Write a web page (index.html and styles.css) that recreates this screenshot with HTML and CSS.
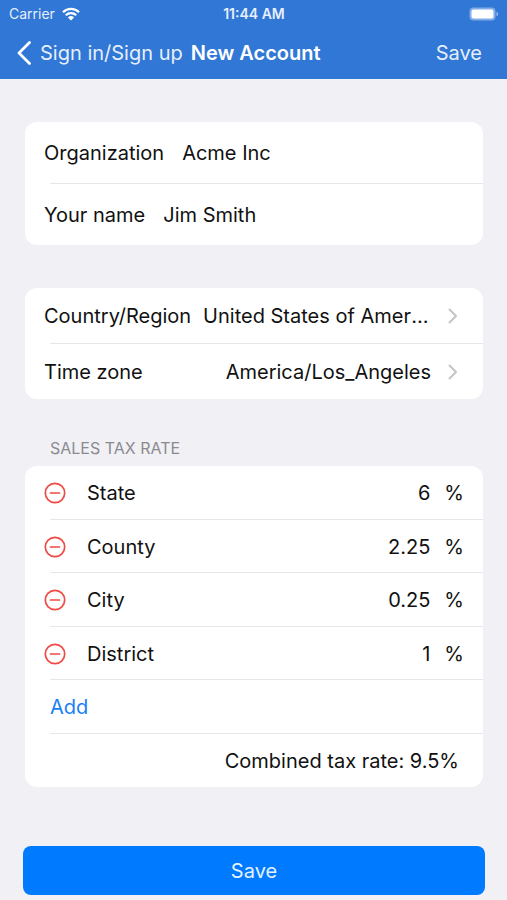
FILE: index.html
```html
<!DOCTYPE html>
<html lang="en">
<head>
<meta charset="utf-8">
<meta name="viewport" content="width=device-width, initial-scale=1">
<title>New Account</title>
<link rel="stylesheet" href="styles.css">
</head>
<body>
<header class="top">
  <div class="status">
    <div class="carrier">
      <span>Carrier</span>
      <svg class="wifi" viewBox="0 0 18 14" aria-hidden="true">
        <path d="M1 5.200a11.400 11.400 0 0 1 16 0M3.800 8.200a7.400 7.400 0 0 1 10.400 0" fill="none" stroke="currentColor" stroke-width="2.300"/>
        <path d="M9 13.600 5.900 10.400a4.500 4.500 0 0 1 6.200 0z" fill="currentColor"/>
      </svg>
    </div>
    <time class="clock">11:44 AM</time>
    <svg class="battery" viewBox="0 0 30 14" aria-hidden="true">
      <rect x=".5" y=".5" width="26" height="13" rx="4" fill="currentColor" opacity=".4"/>
      <rect x="2.500" y="2.500" width="22" height="9" rx="2" fill="currentColor"/>
      <path d="M27.500 4.700c2.200.7 2.200 3.900 0 4.600z" fill="currentColor" opacity=".5"/>
    </svg>
  </div>
  <nav class="bar">
    <a class="back" href="#">
      <svg class="back-icon" viewBox="0 0 14 24" aria-hidden="true"><path d="M12.500 1.500 2 12l10.500 10.500" fill="none" stroke="currentColor" stroke-width="2.800" stroke-linecap="round" stroke-linejoin="round"/></svg>
      <span>Sign in/Sign up</span>
    </a>
    <h1 class="title">New Account</h1>
    <button class="bar-save" type="submit" form="account">Save</button>
  </nav>
</header>

<main>
  <form id="account" class="form">
    <section class="card card-names">
      <div class="row">
        <label for="org">Organization</label>
        <input class="field" id="org" type="text" value="Acme Inc">
      </div>
      <div class="row">
        <label for="name">Your name</label>
        <input class="field" id="name" type="text" value="Jim Smith">
      </div>
    </section>

    <section class="card card-region">
      <button class="row" type="button">
        <span>Country/Region</span>
        <span class="choice">United States of America</span>
        <svg class="chevron" viewBox="0 0 10 16" aria-hidden="true"><path d="m1.500 1.500 6.500 6.500-6.500 6.500" fill="none" stroke="currentColor" stroke-width="2" stroke-linecap="round" stroke-linejoin="round"/></svg>
      </button>
      <button class="row" type="button">
        <span>Time zone</span>
        <span class="choice">America/Los_Angeles</span>
        <svg class="chevron" viewBox="0 0 10 16" aria-hidden="true"><path d="m1.500 1.500 6.500 6.500-6.500 6.500" fill="none" stroke="currentColor" stroke-width="2" stroke-linecap="round" stroke-linejoin="round"/></svg>
      </button>
    </section>

    <h2 class="heading">SALES TAX RATE</h2>
    <section class="card card-tax">
      <div class="row">
        <button class="remove" type="button" aria-label="Remove State"><svg viewBox="0 0 22 22" aria-hidden="true"><circle cx="11" cy="11" r="9.700"/><path d="M6.500 11h9"/></svg></button>
        <label for="state">State</label>
        <input class="rate" id="state" type="text" inputmode="decimal" value="6">
        <span class="unit">%</span>
      </div>
      <div class="row">
        <button class="remove" type="button" aria-label="Remove County"><svg viewBox="0 0 22 22" aria-hidden="true"><circle cx="11" cy="11" r="9.700"/><path d="M6.500 11h9"/></svg></button>
        <label for="county">County</label>
        <input class="rate" id="county" type="text" inputmode="decimal" value="2.25">
        <span class="unit">%</span>
      </div>
      <div class="row">
        <button class="remove" type="button" aria-label="Remove City"><svg viewBox="0 0 22 22" aria-hidden="true"><circle cx="11" cy="11" r="9.700"/><path d="M6.500 11h9"/></svg></button>
        <label for="city">City</label>
        <input class="rate" id="city" type="text" inputmode="decimal" value="0.25">
        <span class="unit">%</span>
      </div>
      <div class="row">
        <button class="remove" type="button" aria-label="Remove District"><svg viewBox="0 0 22 22" aria-hidden="true"><circle cx="11" cy="11" r="9.700"/><path d="M6.500 11h9"/></svg></button>
        <label for="district">District</label>
        <input class="rate" id="district" type="text" inputmode="decimal" value="1">
        <span class="unit">%</span>
      </div>
      <button class="row add" type="button">Add</button>
      <div class="row total">Combined tax rate: 9.5%</div>
    </section>

    <button class="save" type="submit">Save</button>
  </form>
</main>
</body>
</html>
```
FILE: styles.css
```css
* {
  box-sizing: border-box;
}

body {
  margin: 0;
  background: #f1f0f5;
  color: #111;
  font: 20px/24px Inter, "Liberation Sans", sans-serif;
}

button,
input {
  margin: 0;
  padding: 0;
  border: 0;
  background: none;
  color: inherit;
  font: inherit;
}

button {
  cursor: pointer;
}

svg {
  display: block;
  flex: none;
}

.top {
  background: #3077d6;
  color: #fff;
}

.status {
  display: grid;
  grid-template-columns: 1fr auto 1fr;
  align-items: center;
  height: 27px;
  padding: 0 8px 0 9px;
  font-size: 14px;
  line-height: 20px;
}

.carrier {
  display: flex;
  align-items: center;
  gap: 7px;
  color: #e6effb;
}

.wifi {
  width: 18px;
  height: 14px;
  color: #fff;
}

.clock {
  font-weight: 600;
  color: #e6effb;
}

.battery {
  width: 30px;
  height: 14px;
  justify-self: end;
}

.bar {
  display: flex;
  align-items: center;
  height: 52px;
  padding: 0 25px 0 17px;
}

.back {
  display: flex;
  align-items: center;
  gap: 9px;
  color: #e6effb;
  text-decoration: none;
}

.back-icon {
  width: 14px;
  height: 24px;
  color: #fff;
}

.title {
  margin: 0 0 0 8px;
  font-size: 20px;
  font-weight: 600;
}

.bar-save {
  margin-left: auto;
  color: #e6effb;
}

.form {
  display: flex;
  flex-direction: column;
  padding: 43px 24px 5px 25px;
}

.card {
  border-radius: 12px;
  background: #fff;
}

.row {
  position: relative;
  display: flex;
  align-items: center;
  width: 100%;
  height: 54px;
  padding: 0 19px;
  text-align: left;
}

.row:not(:last-child)::after {
  content: "";
  position: absolute;
  left: 25px;
  right: 0;
  bottom: 0;
  height: 1px;
  background: #e6e6e8;
}

.card-names {
  margin-bottom: 43px;
}

.card-names .row {
  height: 61px;
  gap: 18px;
}

.card-names .row:first-child {
  height: 62px;
}

.field {
  flex: 1;
  min-width: 0;
}

.card-region .row {
  height: 55px;
}

.card-region .row:first-child {
  height: 56px;
}

.choice {
  flex: 1;
  min-width: 0;
  margin: 0 17px 0 12px;
  overflow: hidden;
  text-align: right;
  text-overflow: ellipsis;
  white-space: nowrap;
}

.chevron {
  width: 10px;
  height: 16px;
  margin-right: 6px;
  color: #c4c4c7;
}

.heading {
  margin: 39px 25px 8px;
  color: #8a8a8f;
  font-size: 16px;
  font-weight: 400;
  line-height: 20px;
}

.card-tax .row:nth-child(even) {
  height: 53px;
}

.remove {
  width: 22px;
  height: 22px;
  margin-right: 21px;
}

.remove svg {
  width: 22px;
  height: 22px;
  fill: none;
  stroke: #ef4a43;
  stroke-width: 1.7;
  stroke-linecap: round;
}

.rate {
  flex: 1;
  min-width: 0;
  margin-right: 14px;
  text-align: right;
}

.row.add {
  padding-left: 25px;
  color: #1a80f5;
}

.total {
  justify-content: flex-end;
  padding-right: 24px;
}

.save {
  height: 49px;
  margin: 59px -2px 0;
  border-radius: 8px;
  background: #007aff;
  color: #e6f2ff;
}
```
